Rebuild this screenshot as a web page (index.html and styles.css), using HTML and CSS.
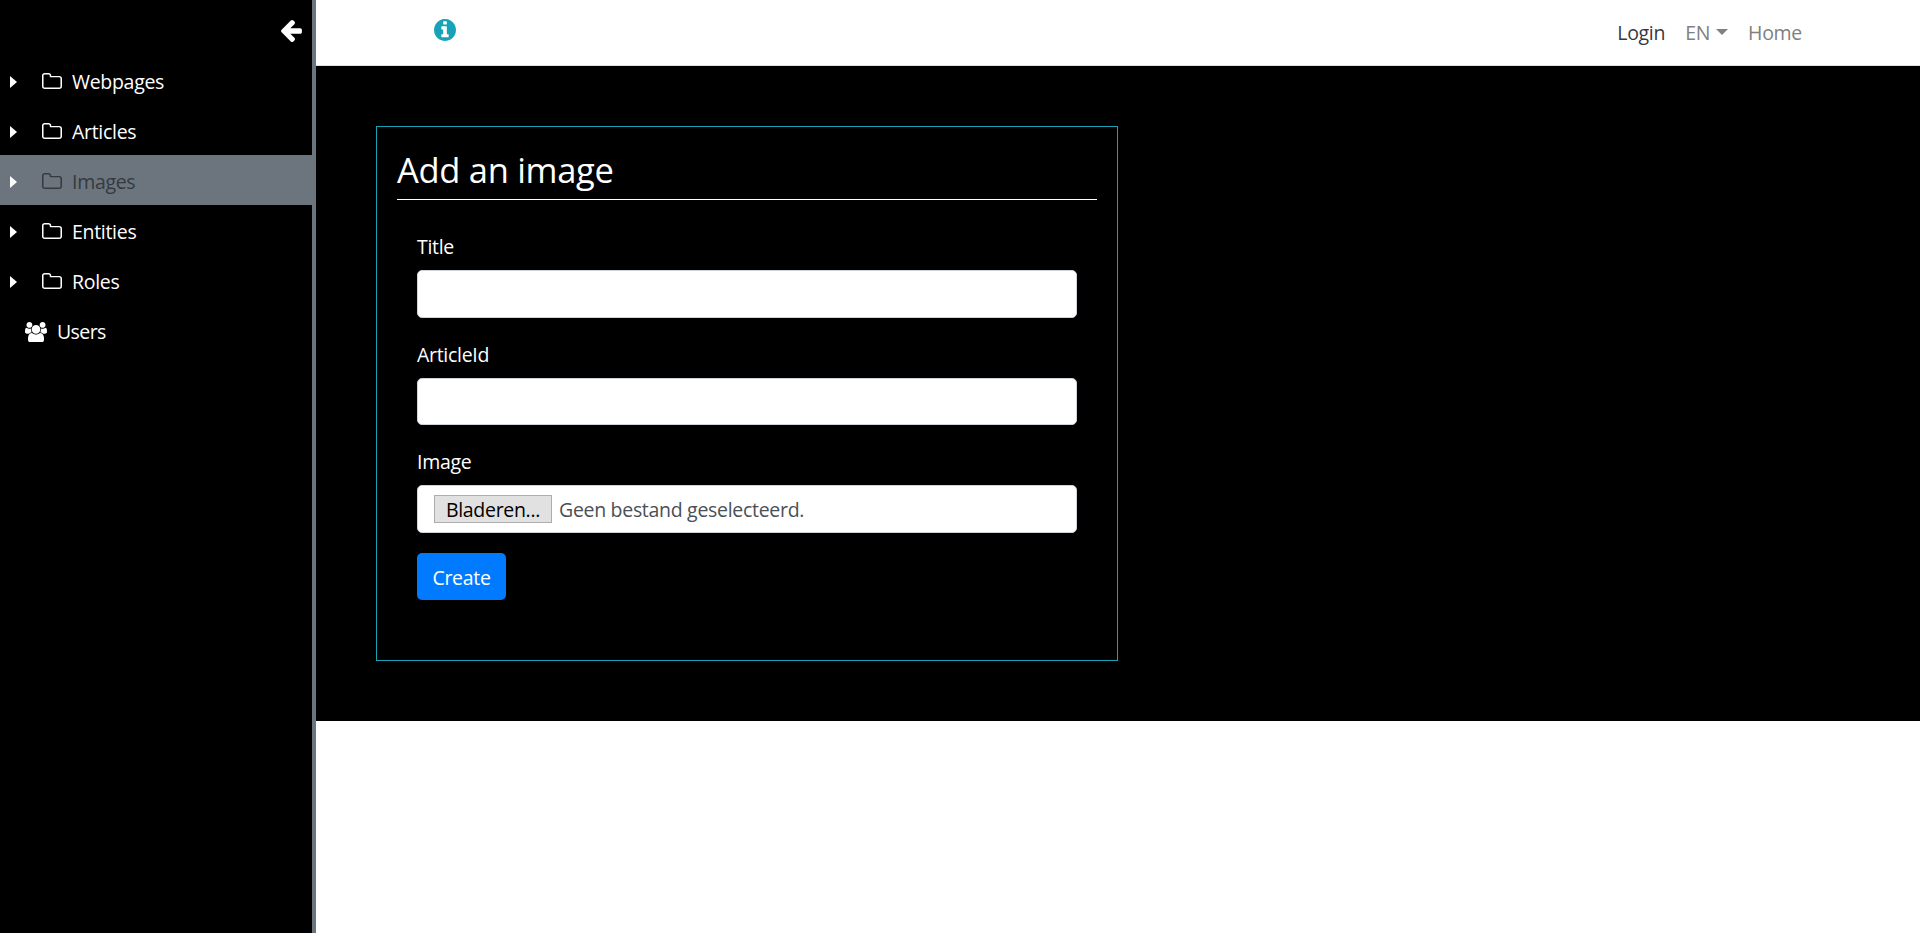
FILE: index.html
```html
<!DOCTYPE html>
<html lang="en">
<head>
<meta charset="utf-8">
<title>Add an image</title>
<link rel="stylesheet" href="styles.css">
</head>
<body>
<svg class="defs" width="0" height="0">
  <symbol id="folder" viewBox="64 128 1664 1408" preserveAspectRatio="none"><path d="M1600 1312V608q0-40-28-68t-68-28H800q-40 0-68-28t-28-68v-64q0-40-28-68t-68-28H288q-40 0-68 28t-28 68v960q0 40 28 68t68 28h1216q40 0 68-28t28-68zm128-704v704q0 92-66 158t-158 66H288q-92 0-158-66t-66-158V352q0-92 66-158t158-66h320q92 0 158 66t66 158v32h672q92 0 158 66t66 158z"/></symbol>
</svg>
<aside class="sidebar">
  <div class="sidebar-top">
    <svg class="arrow" viewBox="192 181 1472 1558"><path d="M1664 896v128q0 53-32.500 90.500T1547 1152H843l293 294q38 36 38 90t-38 90l-75 76q-37 37-90 37-52 0-91-37L229 1050q-37-37-37-90 0-52 37-91l651-650q38-38 91-38 52 0 90 38l75 74q38 38 38 91t-38 91L843 768h704q52 0 84.500 37.500T1664 896z"/></svg>
  </div>
  <nav class="tree">
    <a class="item"><span class="caret"></span><svg class="folder"><use href="#folder"/></svg><span>Webpages</span></a>
    <a class="item"><span class="caret"></span><svg class="folder"><use href="#folder"/></svg><span>Articles</span></a>
    <a class="item active"><span class="caret"></span><svg class="folder"><use href="#folder"/></svg><span>Images</span></a>
    <a class="item"><span class="caret"></span><svg class="folder"><use href="#folder"/></svg><span>Entities</span></a>
    <a class="item"><span class="caret"></span><svg class="folder"><use href="#folder"/></svg><span>Roles</span></a>
    <a class="item leaf"><svg class="users" viewBox="0 0 1920 1792"><path d="M593 896q-162 5-265 128H194q-82 0-138-40.500T0 865q0-353 124-353 6 0 43.500 21t97.500 42.500T384 597q67 0 133-23-5 37-5 66 0 139 81 256zm1071 637q0 120-73 189.500t-194 69.500H523q-121 0-194-69.500T256 1533q0-53 3.500-103.500t14-109T300 1212t43-97.500 62-81 85.500-53.500T602 960q10 0 43 21.500t73 48 107 48T960 1099t135-21.500 107-48 73-48 43-21.500q61 0 111.500 20t85.500 53.500 62 81 43 97.500 26.500 108.500 14 109 3.500 103.500zM640 256q0 106-75 181t-181 75-181-75-75-181 75-181T384 0t181 75 75 181zm704 384q0 159-112.500 271.500T960 1024 688.500 911.500 576 640t112.500-271.500T960 256t271.500 112.500T1344 640zm576 225q0 78-56 118.500T1726 1024h-134q-103-123-265-128 81-117 81-256 0-29-5-66 66 23 133 23 59 0 119-21.500t97.500-42.500 43.500-21q124 0 124 353zm-128-609q0 106-75 181t-181 75-181-75-75-181 75-181T1536 0t181 75 75 181z"/></svg><span>Users</span></a>
  </nav>
</aside>
<div class="page">
  <header class="navbar">
    <svg class="info" viewBox="128 128 1536 1536"><path d="M1152 1376v-160q0-14-9-23t-23-9h-96V672q0-14-9-23t-23-9H672q-14 0-23 9t-9 23v160q0 14 9 23t23 9h96v320h-96q-14 0-23 9t-9 23v160q0 14 9 23t23 9h448q14 0 23-9t9-23zm-128-896V320q0-14-9-23t-23-9H800q-14 0-23 9t-9 23v160q0 14 9 23t23 9h192q14 0 23-9t9-23zm640 416q0 209-103 385.500T1281.500 1561 896 1664t-385.500-103T231 1281.500 128 896t103-385.500T510.500 231 896 128t385.500 103T1561 510.500 1664 896z"/></svg>
    <nav class="links">
      <a class="login">Login</a>
      <a class="lang">EN<span class="drop"></span></a>
      <a class="home">Home</a>
    </nav>
  </header>
  <main class="content">
    <section class="card">
      <h3>Add an image</h3>
      <form class="form">
        <div class="group"><label for="title">Title</label><input class="control" id="title" type="text"></div>
        <div class="group"><label for="article">ArticleId</label><input class="control" id="article" type="text"></div>
        <div class="group"><label>Image</label>
          <div class="control file"><span class="browse">Bladeren...</span><span class="filename">Geen bestand geselecteerd.</span></div>
        </div>
        <button class="create" type="button">Create</button>
      </form>
    </section>
  </main>
</div>
</body>
</html>
```
FILE: styles.css
```css
* { box-sizing: border-box; }
body {
  margin: 0;
  display: flex;
  height: 933px;
  overflow: hidden;
  background: #fff;
  font: 19.5px/30px "Open Sans", "Noto Sans", sans-serif;
  letter-spacing: -0.3px;
}
.defs { position: absolute; }
svg { display: block; flex: none; fill: currentColor; }

.sidebar {
  flex: none;
  width: 316px;
  background: #000;
  color: #fff;
  border-right: 4px solid #6c757d;
}
.sidebar-top { height: 55px; padding: 20px 10px 0 0; display: flex; justify-content: flex-end; }
.arrow { width: 21px; height: 22px; }
.item { display: flex; align-items: center; height: 50px; padding: 4px 0 0 10px; }
.item span { white-space: nowrap; }
.caret {
  margin-right: 25px;
  border-left: 7px solid #fff;
  border-top: 6px solid transparent;
  border-bottom: 6px solid transparent;
}
.folder { width: 20px; height: 16px; margin: -2px 10px 0 0; }
.active { background: #6c757d; color: #343a40; }
.leaf { padding-left: 25px; letter-spacing: -0.6px; }
.users { width: 22px; height: 20.500px; margin-right: 10px; }

.page { flex: 1; }
.navbar {
  height: 66px;
  display: flex;
  justify-content: space-between;
  padding: 0 118px;
  border-bottom: 1px solid #dee2e6;
}
.info { width: 22px; height: 22px; margin-top: 19px; color: #17a2b8; }
.links { display: flex; align-items: flex-start; padding-top: 18px; gap: 20px; color: #808080; }
.login { color: #343a40; }
.lang { display: flex; align-items: center; }
.drop {
  margin: -2px 0 0 6px;
  border-top: 6px solid #808080;
  border-left: 6px solid transparent;
  border-right: 6px solid transparent;
}

.content { height: 655px; padding: 60px; background: #000; color: #fff; }
.card { width: 742px; height: 535px; padding: 20px; border: 1px solid #17a2b8; }
h3 {
  margin: 0;
  padding: 2px 0 8px;
  border-bottom: 1px solid #fff;
  font-size: 34.500px;
  line-height: 42px;
  font-weight: 400;
  letter-spacing: -0.300px;
}
.form { padding: 32px 20px 0; }
.group { margin-bottom: 20px; }
label { display: block; margin-bottom: 8px; }
.group + .group label { padding-top: 2px; }
.control {
  display: block;
  width: 100%;
  height: 47.500px;
  border: 1px solid #ced4da;
  border-radius: 5px;
  background: #fff;
  color: #495057;
}
.file { display: flex; align-items: center; padding-left: 16px; }
.browse {
  width: 118px;
  height: 28px;
  margin-right: 7px;
  border: 1px solid #adadad;
  background: #e1e1e1;
  color: #000;
  line-height: 27px;
  text-align: center;
}
.filename { padding-top: 2px; }
.create {
  display: block;
  width: 89px;
  height: 47.500px;
  padding: 3px 0 0;
  border: 0;
  border-radius: 5px;
  background: #007bff;
  color: #fff;
  font: inherit;
  letter-spacing: inherit;
}
```
